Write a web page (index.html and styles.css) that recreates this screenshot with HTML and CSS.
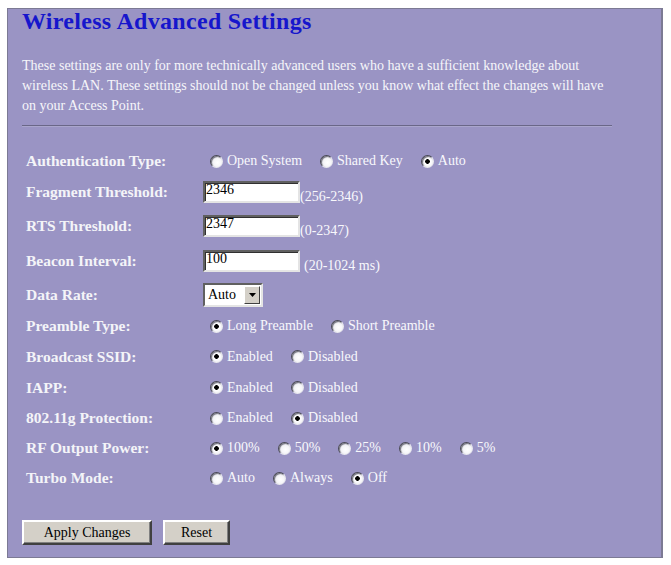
FILE: index.html
```html
<!DOCTYPE html>
<html>
<head>
<meta charset="utf-8">
<title>Wireless Advanced Settings</title>
<link rel="stylesheet" href="styles.css">
</head>
<body>
<div class="panel">
  <h1 class="title">Wireless Advanced Settings</h1>
  <p class="intro">These settings are only for more technically advanced users who have a sufficient knowledge about wireless LAN. These settings should not be changed unless you know what effect the changes will have on your Access Point.</p>
  <div class="rule"></div>
  <form class="form">
    <div class="label">Authentication Type:</div>
    <div class="ctrl radios">
      <label class="opt"><input type="radio" name="auth">Open System</label>
      <label class="opt"><input type="radio" name="auth">Shared Key</label>
      <label class="opt"><input type="radio" name="auth" checked>Auto</label>
    </div>

    <div class="label">Fragment Threshold:</div>
    <div class="ctrl"><input class="text" type="text" value="2346"><span class="range">(256-2346)</span></div>

    <div class="label">RTS Threshold:</div>
    <div class="ctrl"><input class="text" type="text" value="2347"><span class="range">(0-2347)</span></div>

    <div class="label">Beacon Interval:</div>
    <div class="ctrl"><input class="text" type="text" value="100"><span class="range spaced">(20-1024 ms)</span></div>

    <div class="label">Data Rate:</div>
    <div class="ctrl">
      <span class="select"><span class="select-val">Auto</span><span class="select-btn"><svg width="7" height="4" viewBox="0 0 7 4"><path d="M0 0h7L3.5 4z" fill="#000"/></svg></span></span>
    </div>

    <div class="label">Preamble Type:</div>
    <div class="ctrl radios">
      <label class="opt"><input type="radio" name="pre" checked>Long Preamble</label>
      <label class="opt"><input type="radio" name="pre">Short Preamble</label>
    </div>

    <div class="label">Broadcast SSID:</div>
    <div class="ctrl radios">
      <label class="opt"><input type="radio" name="ssid" checked>Enabled</label>
      <label class="opt"><input type="radio" name="ssid">Disabled</label>
    </div>

    <div class="label">IAPP:</div>
    <div class="ctrl radios">
      <label class="opt"><input type="radio" name="iapp" checked>Enabled</label>
      <label class="opt"><input type="radio" name="iapp">Disabled</label>
    </div>

    <div class="label">802.11g Protection:</div>
    <div class="ctrl radios">
      <label class="opt"><input type="radio" name="prot">Enabled</label>
      <label class="opt"><input type="radio" name="prot" checked>Disabled</label>
    </div>

    <div class="label">RF Output Power:</div>
    <div class="ctrl radios">
      <label class="opt"><input type="radio" name="rf" checked>100%</label>
      <label class="opt"><input type="radio" name="rf">50%</label>
      <label class="opt"><input type="radio" name="rf">25%</label>
      <label class="opt"><input type="radio" name="rf">10%</label>
      <label class="opt"><input type="radio" name="rf">5%</label>
    </div>

    <div class="label">Turbo Mode:</div>
    <div class="ctrl radios">
      <label class="opt"><input type="radio" name="turbo">Auto</label>
      <label class="opt"><input type="radio" name="turbo">Always</label>
      <label class="opt"><input type="radio" name="turbo" checked>Off</label>
    </div>
  </form>
  <div class="buttons">
    <button class="btn btn-apply" type="button">Apply Changes</button>
    <button class="btn btn-reset" type="button">Reset</button>
  </div>
</div>
</body>
</html>
```

FILE: styles.css
```css
html, body {
  background: #ffffff;
}
body {
  margin: 8px 6px 0 7px;
  font-family: "Liberation Serif", "Times New Roman", serif;
}
.panel {
  width: 656px;
  height: 550px;
  box-sizing: border-box;
  background: #9a94c4;
  border: 1px solid #7c7a94;
  border-right-width: 2px;
  padding: 0 0 0 14px;
  color: #ffffff;
}
.title {
  margin: 0;
  padding-top: 1px;
  font-size: 24px;
  line-height: 22px;
  font-weight: bold;
  letter-spacing: 0.3px;
  color: #1616cc;
}
.intro {
  margin: 24px 0 0 0;
  width: 596px;
  font-size: 14px;
  line-height: 20px;
  color: #f6f6fa;
}
.rule {
  width: 590px;
  height: 0;
  margin-top: 9px;
  border-top: 1px solid #6a6788;
  border-bottom: 1px solid #aaa6cc;
}
.form {
  margin: 19px 0 0 0;
  display: grid;
  grid-template-columns: 181px auto;
  grid-template-rows: 30px 32px 35px 35px 33px 30px 31px 31px 30px 30px 30px;
  align-items: center;
}
.label {
  padding-left: 4px;
  font-size: 15.5px;
  font-weight: bold;
  color: #f4f4f8;
  white-space: nowrap;
}
.ctrl {
  font-size: 14px;
  white-space: nowrap;
  color: #f8f8fc;
}
.radios {
  padding-left: 7px;
  display: flex;
  align-items: center;
}
.opt {
  display: inline-flex;
  align-items: center;
  margin-right: 18px;
}
.opt input {
  appearance: none;
  -webkit-appearance: none;
  width: 13px;
  height: 13px;
  margin: 0 4px 0 0;
  border-radius: 50%;
  box-sizing: border-box;
  border: 1px solid;
  border-color: #4a4a56 #e8e8ee #e8e8ee #4a4a56;
  box-shadow: inset 1px 1px 1px #70707c;
  background: radial-gradient(circle at 60% 60%, #ffffff 0, #f2f2f6 55%, #d6d6de 100%);
}
.opt input:checked {
  background: radial-gradient(circle at 50% 50%, #000 0, #000 2px, #ffffff 2.6px, #f2f2f6 70%, #d6d6de 100%);
}
.text {
  width: 97px;
  height: 22px;
  box-sizing: border-box;
  margin: 0;
  padding: 0 2px 4px 1px;
  vertical-align: bottom;
  font-family: "Liberation Serif", "Times New Roman", serif;
  font-size: 14px;
  color: #000;
  background: #ffffff;
  border: 2px solid;
  border-color: #606060 #e4e4e4 #e4e4e4 #606060;
  box-shadow: inset 1px 1px 0 #303030;
  outline: none;
}
.range {
  display: inline-block;
  vertical-align: bottom;
  line-height: 14px;
  position: relative;
  top: 1px;
}
.spaced {
  margin-left: 4px;
}
.select {
  display: inline-flex;
  align-items: stretch;
  width: 60px;
  height: 24px;
  box-sizing: border-box;
  background: #ffffff;
  border: 2px solid;
  border-color: #606060 #e4e4e4 #e4e4e4 #606060;
  color: #000;
}
.select-val {
  flex: 1;
  padding: 2px 0 0 3px;
  font-size: 14px;
  line-height: 16px;
}
.select-btn {
  width: 16px;
  margin: 1px 1px 1px 0;
  box-sizing: border-box;
  background: #d4d0c8;
  border: 1px solid;
  border-color: #ffffff #404040 #404040 #ffffff;
  display: flex;
  align-items: center;
  justify-content: center;
}
.buttons {
  margin-top: 27px;
  display: flex;
  gap: 11px;
}
.btn {
  height: 25px;
  box-sizing: border-box;
  margin: 0;
  padding: 0;
  font-family: "Liberation Serif", "Times New Roman", serif;
  font-size: 14px;
  color: #000;
  background: #d4d0c8;
  border: 2px solid;
  border-color: #ffffff #404040 #404040 #ffffff;
  box-shadow: inset -1px -1px 0 #808080;
}
.btn-apply {
  width: 130px;
}
.btn-reset {
  width: 67px;
}
```
